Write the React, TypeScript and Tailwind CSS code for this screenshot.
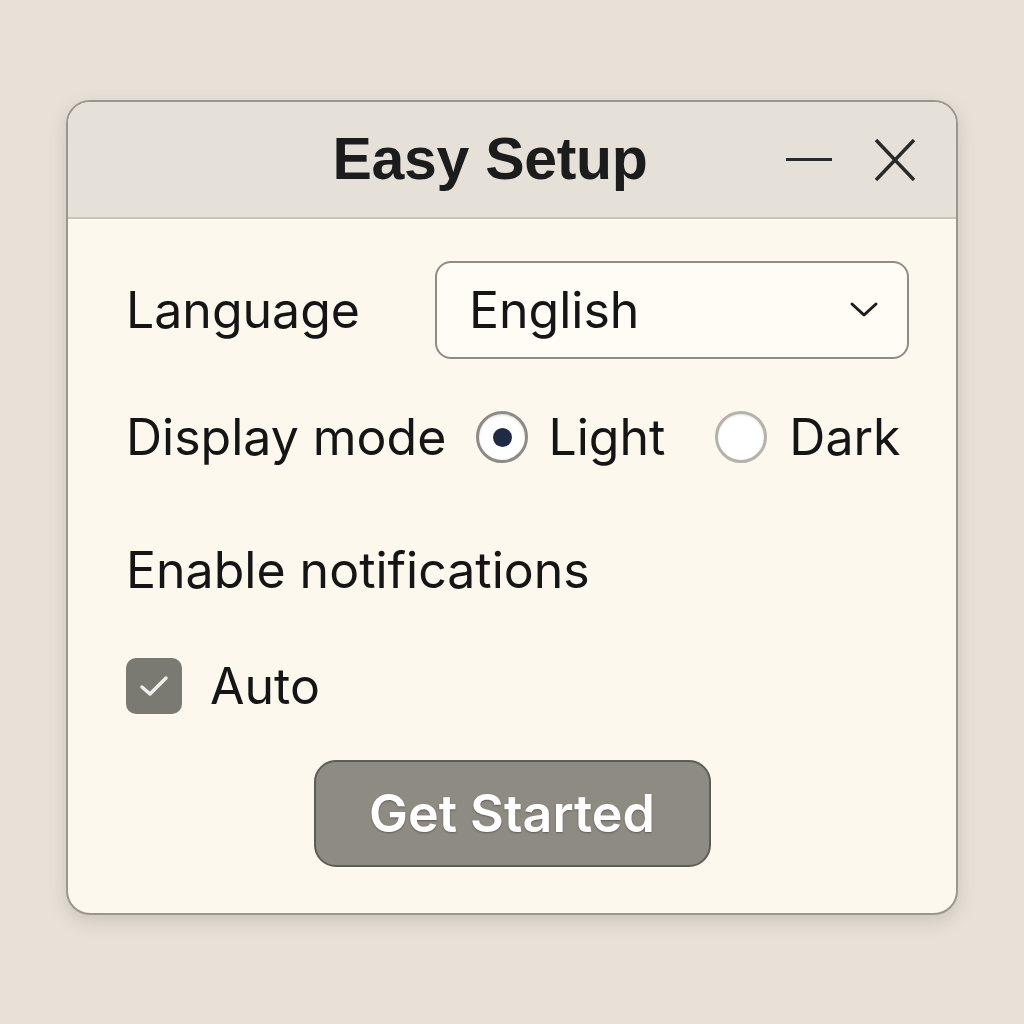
import React, {useState} from 'react';

const App: React.FC = () => {
    const [mode, setMode] = useState<'light' | 'dark'>('light');
    const [auto, setAuto] = useState(true);

    return (
        <div className="w-[1024px] h-[1024px] bg-[#e7e1d7] pt-[100px] pl-[66px]" style={{fontFamily: 'Inter, "Noto Sans", sans-serif'}}>
            <div className="w-[892px] h-[815px] rounded-[24px] border-2 border-[#9a978f] bg-[#fdf8ee] overflow-hidden shadow-[0_6px_18px_rgba(80,70,50,0.18)] flex flex-col">
                {/* Title bar */}
                <div className="relative h-[117px] shrink-0 bg-[#e5e1d8] border-b-2 border-[#c9c4b9] flex items-center justify-center pr-[44px]">
                    <h1 className="text-[59px] font-bold text-[#1c1c1c] tracking-[-0.3px]" style={{fontFamily: '"Liberation Sans", Arial, sans-serif'}}>
                        Easy Setup
                    </h1>
                    <div className="absolute right-[40px] top-0 h-full flex items-center gap-[42px]">
                        <div className="w-[46px] h-[3px] bg-[#2a2a2a]"/>
                        <svg width="42" height="42" viewBox="0 0 42 42" fill="none" stroke="#2a2a2a" strokeWidth="3.5">
                            <path d="M2 1 L40 41 M40 1 L2 41"/>
                        </svg>
                    </div>
                </div>

                {/* Body */}
                <div className="flex-1 flex flex-col pl-[58px] pr-[47px] pt-[42px] text-[#151515] text-[50px]">
                    <div className="flex items-center justify-between">
                        <span>Language</span>
                        <div className="w-[474px] h-[98px] rounded-[16px] border-2 border-[#8f8c85] bg-[#fffcf6] flex items-center justify-between pl-[32px] pr-[28px]">
                            <span>English</span>
                            <svg width="30" height="18" viewBox="0 0 30 18" fill="none" stroke="#1c1c1c" strokeWidth="3" strokeLinecap="round" strokeLinejoin="round">
                                <path d="M3 3 L15 14 L27 3"/>
                            </svg>
                        </div>
                    </div>

                    <div className="flex items-center mt-[48px] h-[60px]">
                        <span>Display mode</span>
                        <button onClick={() => setMode('light')} className="flex items-center ml-[30px]">
                            <span className="w-[52px] h-[52px] rounded-full border-[3px] border-[#8e8b85] bg-white flex items-center justify-center shadow-[inset_0_1px_2px_rgba(0,0,0,0.15)]">
                                {mode === 'light' && <span className="w-[19px] h-[19px] rounded-full bg-[#1f2b45]"/>}
                            </span>
                            <span className="ml-[20px]">Light</span>
                        </button>
                        <button onClick={() => setMode('dark')} className="flex items-center ml-[50px]">
                            <span className="w-[52px] h-[52px] rounded-full border-[3px] border-[#b5b2ab] bg-white flex items-center justify-center shadow-[inset_0_1px_2px_rgba(0,0,0,0.1)]">
                                {mode === 'dark' && <span className="w-[19px] h-[19px] rounded-full bg-[#1f2b45]"/>}
                            </span>
                            <span className="ml-[22px]">Dark</span>
                        </button>
                    </div>

                    <div className="mt-[73px] h-[60px] flex items-center">Enable notifications</div>

                    <button onClick={() => setAuto(!auto)} className="mt-[56px] h-[60px] flex items-center">
                        <span className="w-[56px] h-[56px] rounded-[10px] bg-[#7a7a72] flex items-center justify-center">
                            {auto && (
                                <svg width="34" height="28" viewBox="0 0 34 28" fill="none" stroke="#eeeeea" strokeWidth="3.5" strokeLinecap="round" strokeLinejoin="round">
                                    <path d="M5 15 L13 22 L29 6"/>
                                </svg>
                            )}
                        </span>
                        <span className="ml-[28px]">Auto</span>
                    </button>

                    <div className="flex justify-center mt-[44px] pr-[11px]">
                        <button className="w-[397px] h-[107px] rounded-[22px] bg-[#8e8c82] border-2 border-[#5e5c56] text-white text-[52px] font-semibold" style={{fontFamily: 'Inter, Roboto, sans-serif', textShadow: '0 1px 2px rgba(0,0,0,0.35)'}}>
                            Get Started
                        </button>
                    </div>
                </div>
            </div>
        </div>
    );
};

export default App;
